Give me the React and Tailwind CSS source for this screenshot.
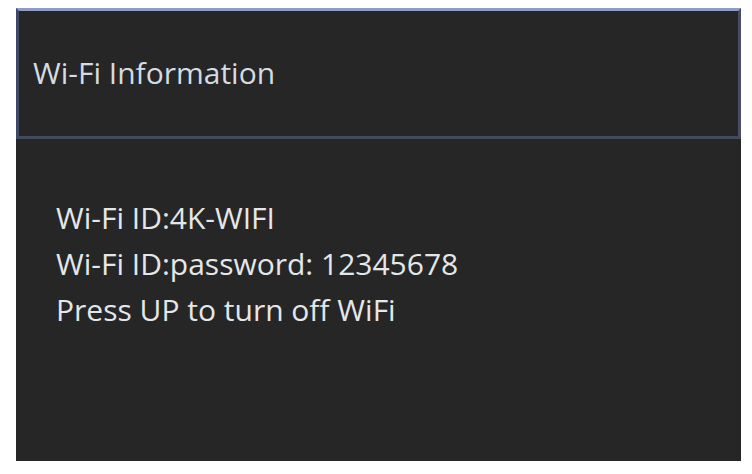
import React from "react";

const lines = [
  "Wi-Fi ID:4K-WIFI",
  "Wi-Fi ID:password: 12345678",
  "Press UP to turn off WiFi",
];

export default function App() {
  return (
    <div className="w-[752px] h-[474px] bg-white pt-2 pl-4 pr-[11px] pb-[13px] [font-family:'Open_Sans',sans-serif]">
      <div className="h-full flex flex-col bg-[#262626]">
        <div className="h-[131px] flex items-center border-[3px] border-t-[#8d9bc6] border-l-[#3d4966] border-r-[#4b4b66] border-b-[#414b5e] pl-[14px] pb-[2px]">
          <span className="text-[30px] text-[#d3dce2] leading-none">Wi-Fi Information</span>
        </div>
        <div className="flex flex-col pt-[56px] pl-10 text-[30px] leading-[46px] text-[#e4e7e9]">
          {lines.map((l) => (
            <p key={l}>{l}</p>
          ))}
        </div>
      </div>
    </div>
  );
}
